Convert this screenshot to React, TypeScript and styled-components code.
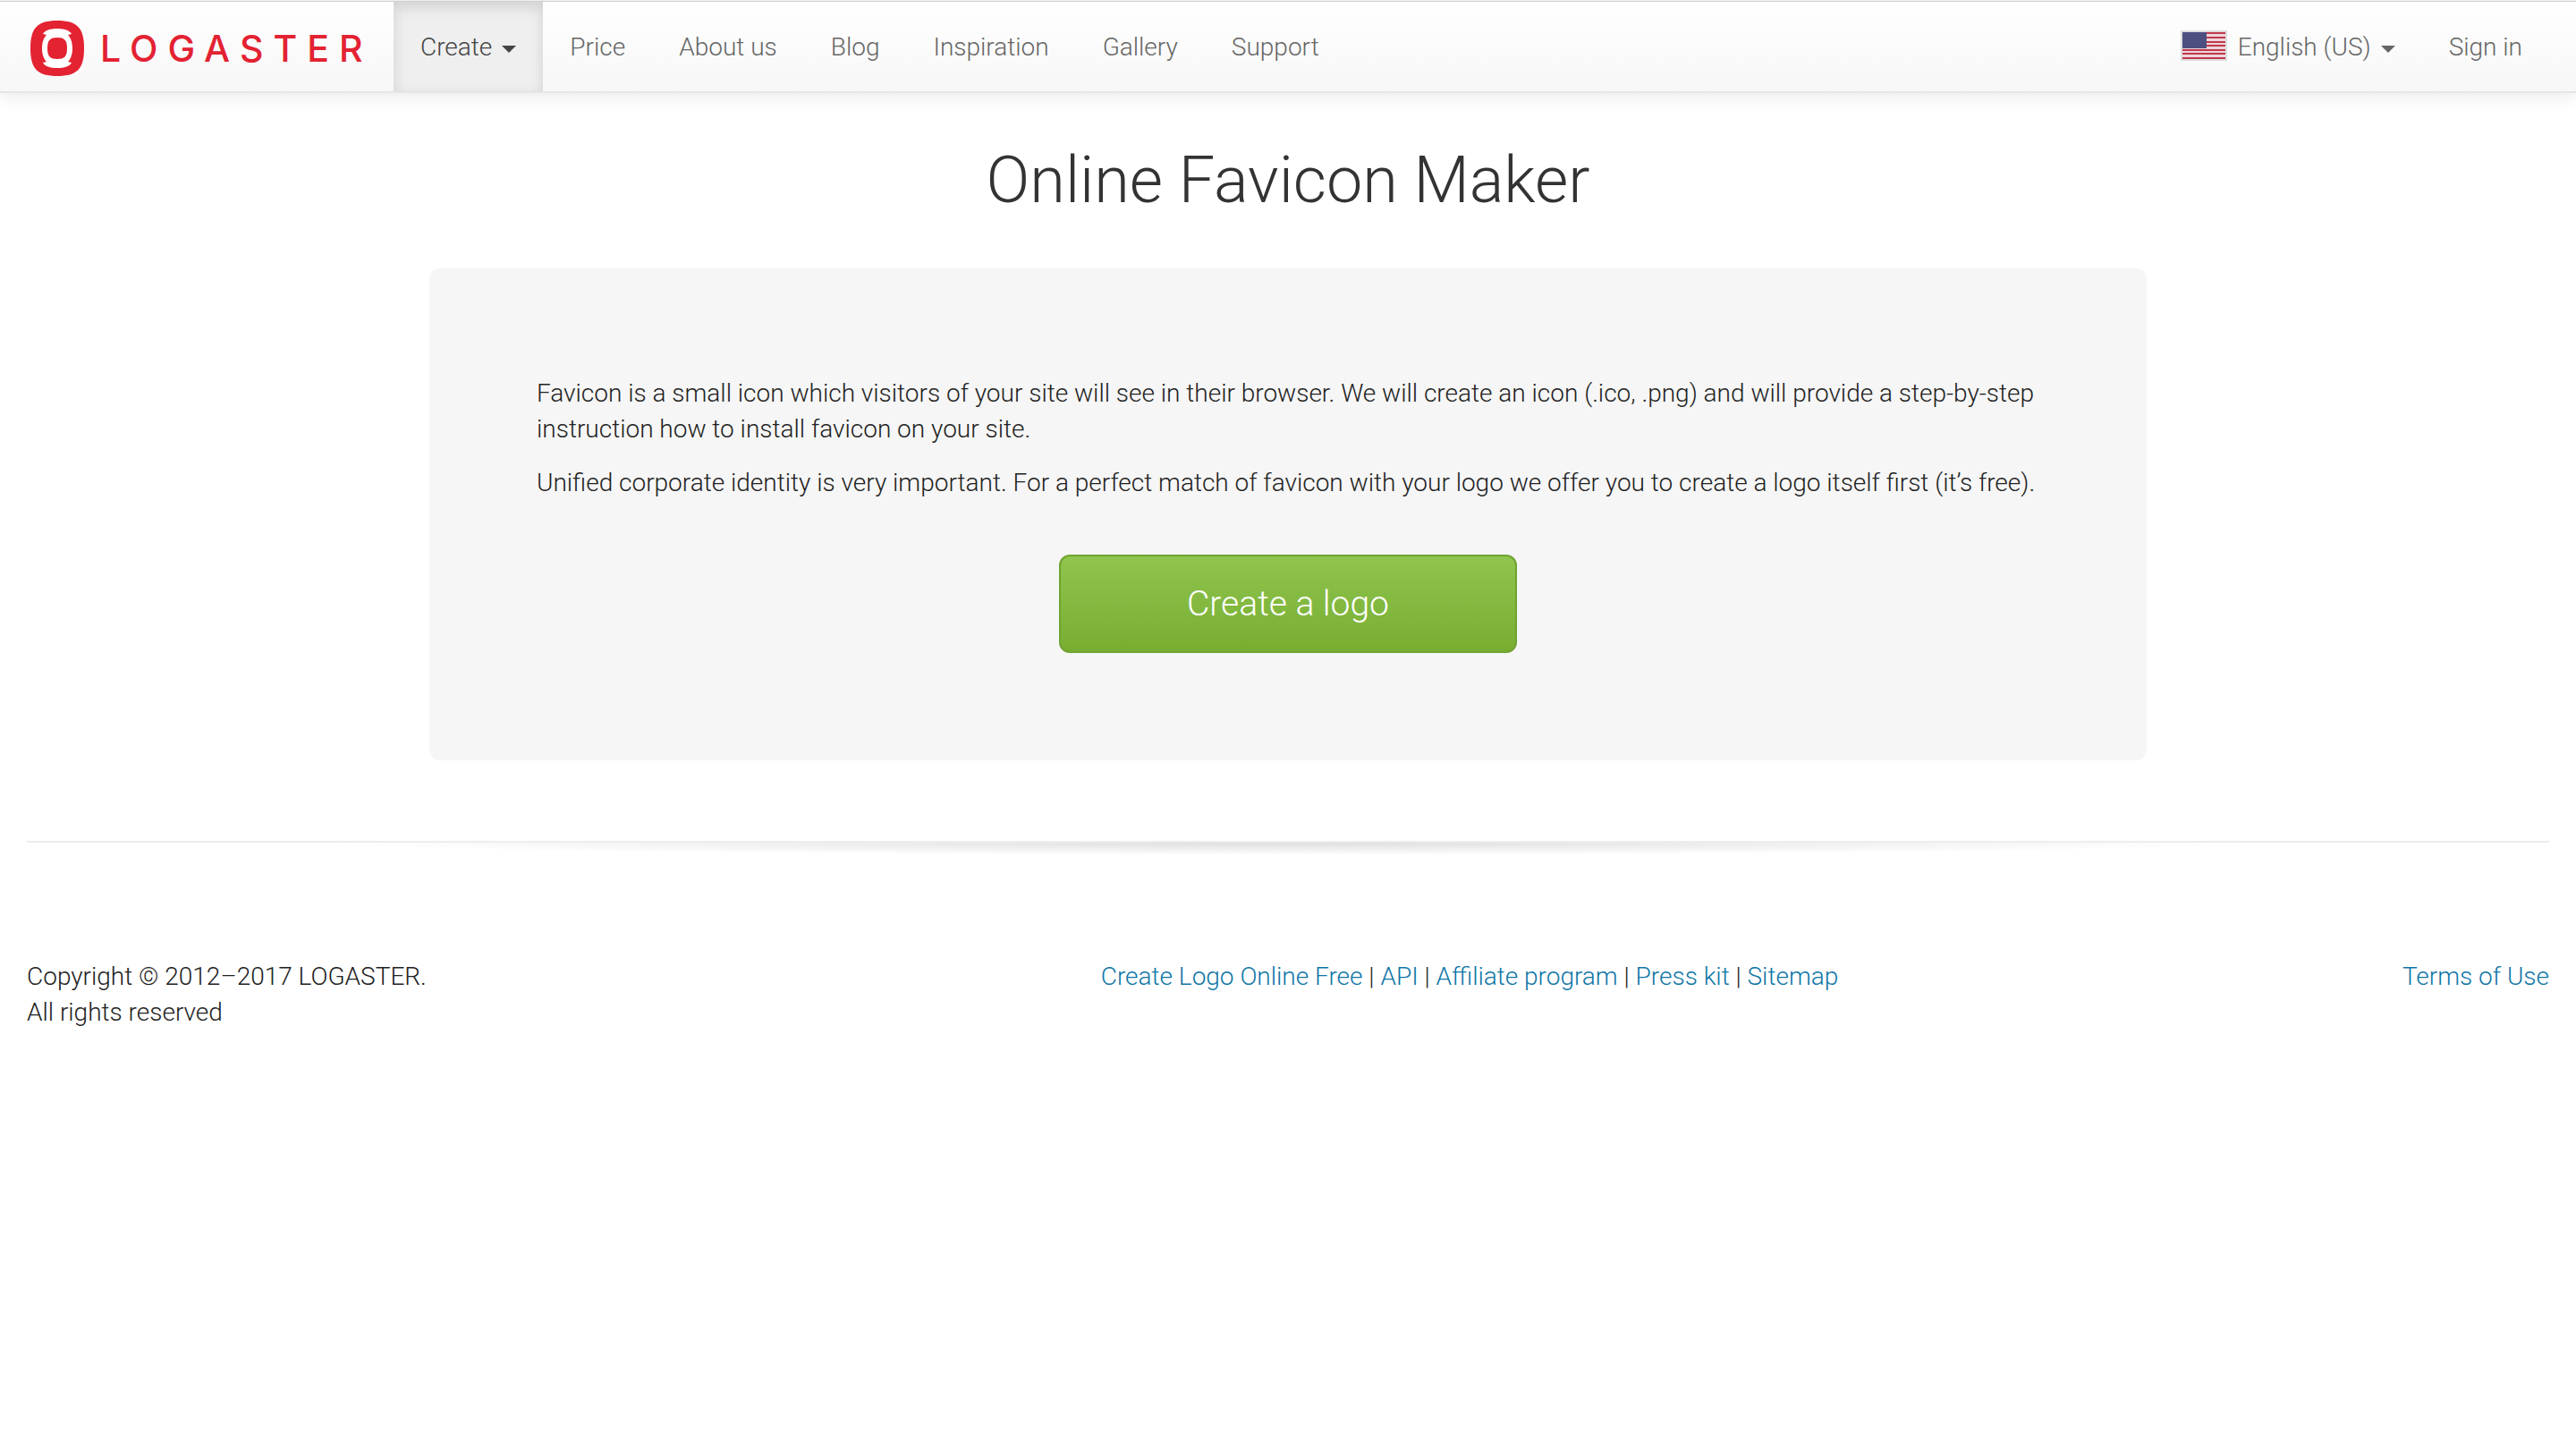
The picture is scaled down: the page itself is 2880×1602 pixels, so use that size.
import React from "react";
import styled, { createGlobalStyle, css } from "styled-components";

const GlobalStyle = createGlobalStyle`
  *, *::before, *::after { box-sizing: border-box; }
  body {
    margin: 0;
    background: #fff;
    color: #222;
    font: 300 28px/40px Roboto, "Liberation Sans", sans-serif;
  }
`;

const Navbar = styled.header`
  display: flex;
  padding: 1px 30px 0 0;
  border-top: 1px solid #efefef;
  border-bottom: 2px solid #e5e5e5;
  background: linear-gradient(#fff, #f7f7f7);
  box-shadow: inset 0 1px 0 #d0d0d0, 0 2px 20px rgba(0, 0, 0, 0.1);
`;

const Brand = styled.a`
  display: flex;
  align-items: center;
  gap: 18px;
  width: 440px;
  height: 100px;
  padding: 3px 0 0 34px;
  color: #e32232;
  text-decoration: none;
`;

const Wordmark = styled.span`
  font: 500 41px/60px Inter, "DejaVu Sans", sans-serif;
  letter-spacing: 11px;
`;

const Menu = styled.nav<{ $end?: boolean }>`
  display: flex;
  ${(p) => p.$end && css`margin-left: auto;`}
`;

const itemStyle = css<{ $active?: boolean }>`
  display: flex;
  align-items: center;
  height: 100px;
  padding: 2px 30px 0;
  border: 0;
  background: none;
  color: #666;
  font: inherit;
  text-decoration: none;
  cursor: pointer;
  ${(p) =>
    p.$active &&
    css`
      color: #444;
      background: #efefef;
      box-shadow: inset 0 6px 16px rgba(0, 0, 0, 0.125);
    `}
`;

const NavLink = styled.a<{ $active?: boolean }>`${itemStyle}`;
const NavButton = styled.button<{ $active?: boolean }>`${itemStyle}`;

const Caret = styled.span`
  margin: 4px 0 0 11px;
  border-top: 8px solid currentColor;
  border-left: 8px solid transparent;
  border-right: 8px solid transparent;
`;

const FlagIcon = styled.svg`
  width: 52px;
  height: 34px;
  margin: 0 12px 4px 0;
`;

const Title = styled.h1`
  margin: 60px 30px;
  color: #333;
  font-size: 72px;
  font-weight: 300;
  line-height: 76px;
  text-align: center;
`;

const Panel = styled.main`
  max-width: 1920px;
  margin: 0 auto;
  padding: 120px;
  border-radius: 12px;
  background: #f6f6f6;
`;

const Paragraph = styled.p`
  margin: 0 0 20px;
`;

const CreateButton = styled.button`
  display: block;
  width: 512px;
  height: 110px;
  margin: 60px auto 0;
  border: 2px solid #6fa32f;
  border-radius: 12px;
  background: linear-gradient(#8fc44e, #77ae31);
  color: #fff;
  font: 300 39px/60px Roboto, "Liberation Sans", sans-serif;
  cursor: pointer;
`;

const Divider = styled.hr`
  height: 16px;
  margin: 90px 30px 0;
  border: 0;
  border-top: 2px solid #ededed;
  background: radial-gradient(ellipse 38% 100% at 50% 0, #dedede, #fff);
`;

const Footer = styled.footer`
  display: grid;
  grid-template-columns: 570px 1fr auto;
  padding: 116px 30px 60px;
`;

const FooterLinks = styled.nav`
  text-align: center;
`;

const Link = styled.a`
  color: #0f76a6;
  text-decoration: none;
`;

const Logo = () => (
  <svg width="60" height="62" viewBox="0 0 60 62" aria-hidden="true">
    <path fill="#e32232" d="M30 0C52 0 60 8 60 31S52 62 30 62 0 54 0 31 8 0 30 0Z" />
    <path
      fill="#fff"
      d="M30 9C38 9 44 11 46 15L42 16C45 19 47 24 47 31S45 43 42 46L46 47C44 51 38 53 30 53S16 51 14 47L18 46C15 43 13 38 13 31S15 19 18 16L14 15C16 11 22 9 30 9Z"
    />
    <path fill="#e32232" d="M30 19C38 19 41 22 41 31S38 43 30 43 19 40 19 31 22 19 30 19Z" />
  </svg>
);

const Flag = () => (
  <FlagIcon viewBox="0 0 52 34" aria-hidden="true">
    <path fill="#ddd" d="M0 0h52v34H0z" />
    <path fill="#f0d5da" d="M2 2h48v30H2z" />
    {[2, 7, 12, 16, 21, 25, 30].map((y) => (
      <path key={y} fill="#bd3a4c" d={`M2 ${y}h48v2H2z`} />
    ))}
    <path fill="#4c4f80" d="M2 2h27v18H2z" />
  </FlagIcon>
);

const menuItems = ["Price", "About us", "Blog", "Inspiration", "Gallery", "Support"];
const footerItems = ["Create Logo Online Free", "API", "Affiliate program", "Press kit", "Sitemap"];

export default function App() {
  return (
    <>
      <GlobalStyle />
      <Navbar>
        <Brand href="#">
          <Logo />
          <Wordmark>LOGASTER</Wordmark>
        </Brand>
        <Menu>
          <NavButton type="button" $active>
            Create
            <Caret />
          </NavButton>
          {menuItems.map((item) => (
            <NavLink key={item} href="#">{item}</NavLink>
          ))}
        </Menu>
        <Menu $end>
          <NavButton type="button">
            <Flag />
            English (US)
            <Caret />
          </NavButton>
          <NavLink href="#">Sign in</NavLink>
        </Menu>
      </Navbar>
      <Title>Online Favicon Maker</Title>
      <Panel>
        <Paragraph>
          Favicon is a small icon which visitors of your site will see in their browser. We will
          create an icon (.ico, .png) and will provide a step-by-step instruction how to install
          favicon on your site.
        </Paragraph>
        <Paragraph>
          Unified corporate identity is very important. For a perfect match of favicon with your
          logo we offer you to create a logo itself first (it’s free).
        </Paragraph>
        <CreateButton type="button">Create a logo</CreateButton>
      </Panel>
      <Divider />
      <Footer>
        <div>
          Copyright © 2012–2017 LOGASTER.
          <br />
          All rights reserved
        </div>
        <FooterLinks>
          {footerItems.map((item, i) => (
            <React.Fragment key={item}>
              {i > 0 && " | "}
              <Link href="#">{item}</Link>
            </React.Fragment>
          ))}
        </FooterLinks>
        <Link href="#">Terms of Use</Link>
      </Footer>
    </>
  );
}
